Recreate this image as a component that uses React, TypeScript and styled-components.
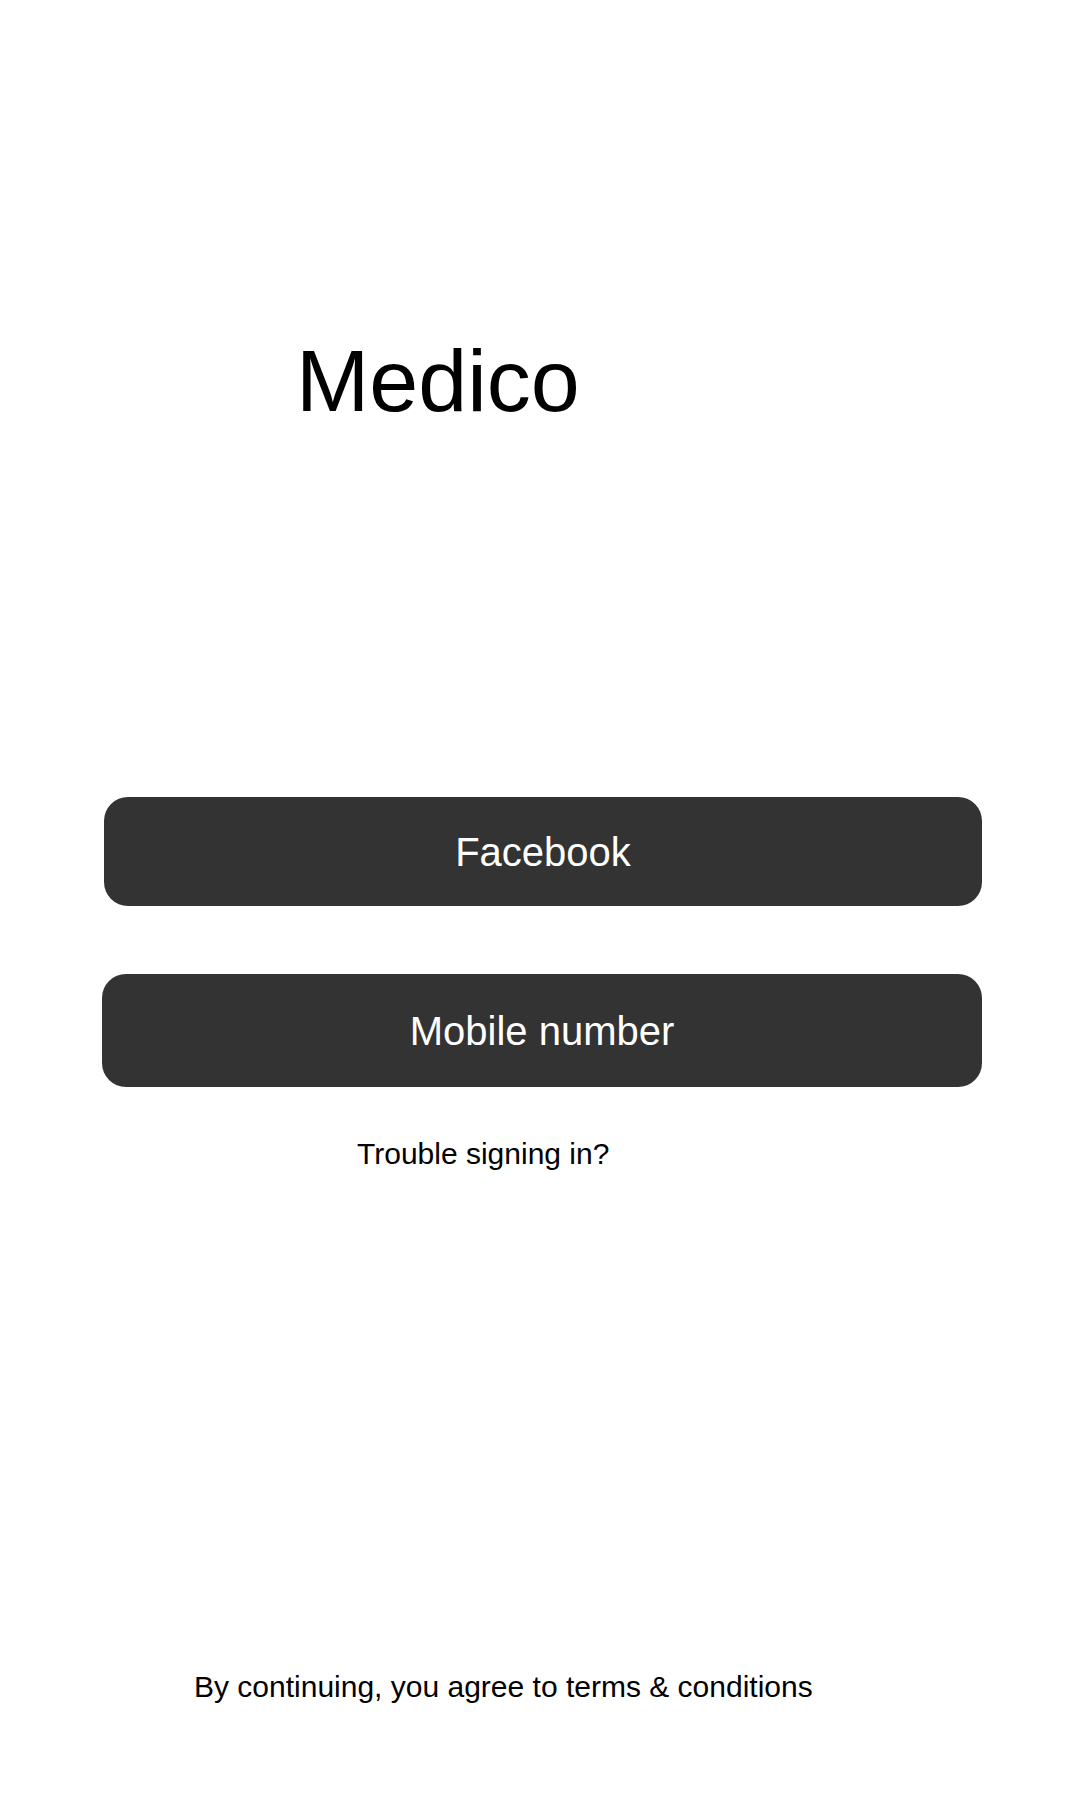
import React from "react";
import styled, { createGlobalStyle } from "styled-components";

const Global = createGlobalStyle`
  html, body {
    margin: 0;
    padding: 0;
    background: #ffffff;
  }
  body {
    font-family: "Liberation Sans", Arial, sans-serif;
    color: #000000;
  }
`;

const Screen = styled.main`
  width: 1080px;
  height: 1800px;
  display: flex;
  flex-direction: column;
  background: #ffffff;
  overflow: hidden;
`;

const Title = styled.h1`
  margin: 337px 0 0 296px;
  font-family: "Liberation Sans", Arial, sans-serif;
  font-weight: 400;
  font-size: 88px;
  line-height: 88px;
  color: #000000;
`;

const Actions = styled.div`
  display: flex;
  flex-direction: column;
  margin-top: 372px;
  gap: 68px;
`;

const ActionButton = styled.button<{ $left: number; $width: number; $height: number }>`
  margin-left: ${(p) => p.$left}px;
  width: ${(p) => p.$width}px;
  height: ${(p) => p.$height}px;
  border: none;
  border-radius: 24px;
  background: #333333;
  color: #ffffff;
  font-family: "Liberation Sans", Arial, sans-serif;
  font-size: 40px;
  line-height: 40px;
  padding: 0;
  display: flex;
  align-items: center;
  justify-content: center;
  cursor: pointer;
`;

const Link = styled.a<{ $top: number; $left: number }>`
  display: block;
  margin: ${(p) => p.$top}px 0 0 ${(p) => p.$left}px;
  font-family: "Liberation Sans", Arial, sans-serif;
  font-size: 30px;
  line-height: 30px;
  color: #000000;
  text-decoration: none;
  white-space: nowrap;
`;

export default function App() {
  return (
    <>
      <Global />
      <Screen>
        <Title>Medico</Title>
        <Actions>
          <ActionButton $left={104} $width={878} $height={109}>
            Facebook
          </ActionButton>
          <ActionButton $left={102} $width={880} $height={113}>
            Mobile number
          </ActionButton>
        </Actions>
        <Link $top={52} $left={357}>
          Trouble signing in?
        </Link>
        <Link $top={503} $left={194}>
          By continuing, you agree to terms &amp; conditions
        </Link>
      </Screen>
    </>
  );
}
